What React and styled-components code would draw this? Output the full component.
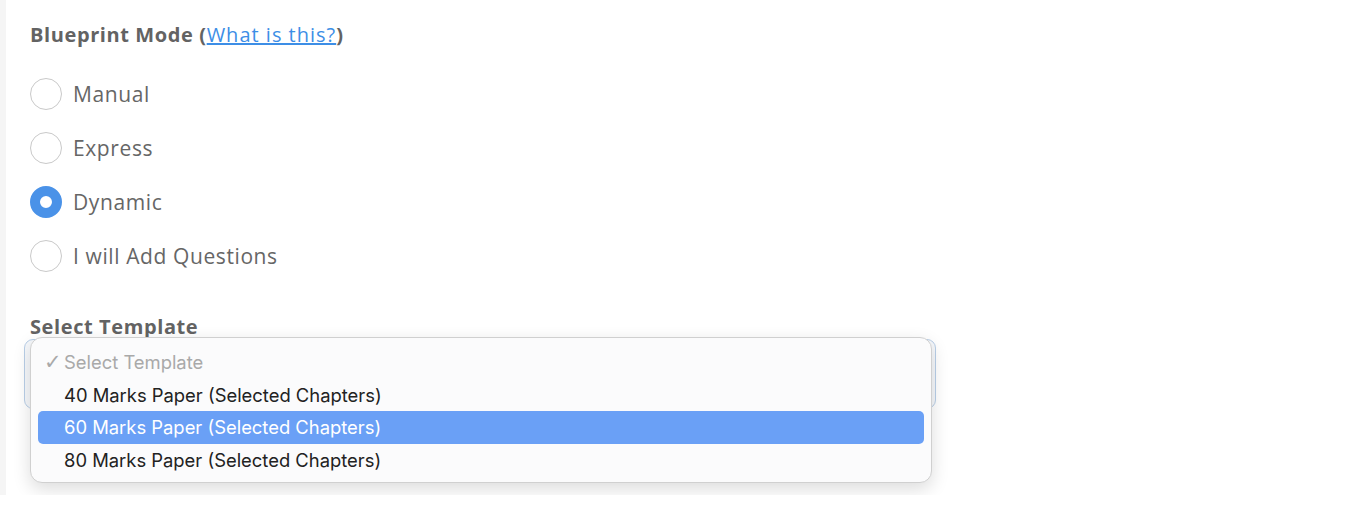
import styled, { createGlobalStyle } from "styled-components"

const Global = createGlobalStyle`
  body {
    margin: 0;
    background: #ffffff;
    font-family: "Open Sans", Lato, sans-serif;
  }
`

const Page = styled.div`
  height: 495px;
  border-left: 6px solid #f5f5f5;
  padding: 23px 0 0 24px;
  box-sizing: border-box;
`

const Heading = styled.div`
  font-size: 20px;
  line-height: 24px;
  font-weight: 700;
  color: #636363;
  letter-spacing: 0.6px;
`

const Link = styled.a`
  font-weight: 400;
  color: #3d8ee6;
  text-decoration: underline;
  letter-spacing: 1px;
`

const Radios = styled.div`
  display: flex;
  flex-direction: column;
  gap: 22px;
  margin: 31px 0 43px;
`

const RadioRow = styled.label`
  display: flex;
  align-items: center;
  gap: 11px;
  height: 32px;
  font-size: 21px;
  color: #666;
  letter-spacing: 0.6px;
`

const Circle = styled.span`
  width: 32px;
  height: 32px;
  box-sizing: border-box;
  border-radius: 50%;
  background: #fff;
  border: ${p => (p.$on ? "10px solid #4a92e8" : "1.5px solid #c9c9c9")};
`

const SelectWrap = styled.div`
  position: relative;
  width: 912px;
  margin: 0 0 0 -6px;
`

const SelectBox = styled.div`
  height: 68px;
  border: 1.5px solid #b9cfe8;
  border-radius: 9px;
  background: #f6f8fb;
`

const Menu = styled.div`
  position: absolute;
  left: 6px;
  top: -2px;
  width: 902px;
  box-sizing: border-box;
  padding: 8px 7px 6px;
  background: #fbfbfc;
  border: 1px solid #d0d0d0;
  border-radius: 12px;
  box-shadow: 0 6px 18px rgba(0, 0, 0, 0.14);
  font-family: Inter, "Liberation Sans", sans-serif;
`

const Option = styled.div`
  height: 32.5px;
  display: flex;
  align-items: center;
  padding-left: 26px;
  position: relative;
  border-radius: 5px;
  font-size: 18.4px;
  color: ${p => (p.$active ? "#fff" : p.$muted ? "#a9a9a9" : "#222")};
  background: ${p => (p.$active ? "#6aa0f6" : "transparent")};
`

const Check = styled.span`
  position: absolute;
  left: 6px;
  font-size: 21px;
  font-family: "DejaVu Sans", sans-serif;
`

const options = [
  "40 Marks Paper (Selected Chapters)",
  "60 Marks Paper (Selected Chapters)",
  "80 Marks Paper (Selected Chapters)",
]

const modes = ["Manual", "Express", "Dynamic", "I will Add Questions"]

export default function App() {
  return (
    <>
      <Global />
      <Page>
        <Heading>
          Blueprint Mode (<Link href="#">What is this?</Link>)
        </Heading>
        <Radios>
          {modes.map(m => (
            <RadioRow key={m}>
              <Circle $on={m === "Dynamic"} />
              {m}
            </RadioRow>
          ))}
        </Radios>
        <Heading>Select Template</Heading>
        <SelectWrap>
          <SelectBox />
          <Menu>
            <Option $muted>
              <Check>✓</Check>Select Template
            </Option>
            {options.map((o, i) => (
              <Option key={o} $active={i === 1}>
                {o}
              </Option>
            ))}
          </Menu>
        </SelectWrap>
      </Page>
    </>
  )
}
